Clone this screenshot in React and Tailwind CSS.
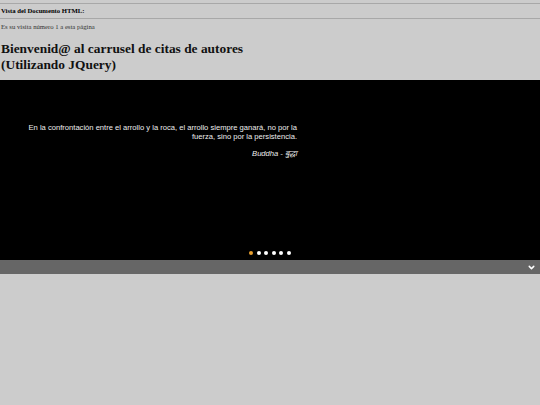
import { ChevronDown } from "lucide-react";

const quote = {
  text: "En la confrontación entre el arrollo y la roca, el arrollo siempre ganará, no por la fuerza, sino por la persistencia.",
  author: "Buddha - बुद्धा",
};

const dots = [0, 1, 2, 3, 4, 5];

export default function App() {
  return (
    <div className="min-h-[405px] w-[540px] bg-[#cccccc] font-['Liberation_Serif',serif] text-black antialiased">
      <div className="pt-[3px]">
        <div className="border-t border-[#a8a8a8]" />
        <div className="h-[14px] pl-px text-[6.7px] leading-[14px] font-bold">Vista del Documento HTML:</div>
        <div className="border-t border-[#a8a8a8]" />
        <div className="pt-[1px] pl-px text-[6.7px] leading-[14px] text-[#333]">Es su visita número 1 a esta página</div>
        <h1 className="mt-[7px] pl-px text-[13.4px] leading-[16px] font-bold text-[#111]">
          Bienvenid@ al carrusel de citas de autores
          <br />
          (Utilizando JQuery)
        </h1>
      </div>

      <div className="mt-[7px] flex h-[180px] flex-col bg-black font-['Liberation_Sans',Arial,sans-serif] text-[#eeeeee]">
        <div className="w-[297px] pt-[43px] pl-[28px] text-right">
          <p className="text-[7.6px] leading-[9px]">{quote.text}</p>
          <p className="mt-[8px] text-[7.6px] leading-[9px] italic">
            {quote.author}
          </p>
        </div>
        <div className="mt-auto mb-[5px] flex justify-center gap-[3.5px]">
          {dots.map((d) => (
            <span
              key={d}
              className={`h-[4px] w-[4px] rounded-full ${d === 0 ? "bg-[#e8a030]" : "bg-white"}`}
            />
          ))}
        </div>
      </div>

      <div className="flex h-[14px] items-center justify-end bg-[#666666] pr-[4px]">
        <ChevronDown className="h-[9px] w-[9px] text-white" strokeWidth={4} />
      </div>
    </div>
  );
}
